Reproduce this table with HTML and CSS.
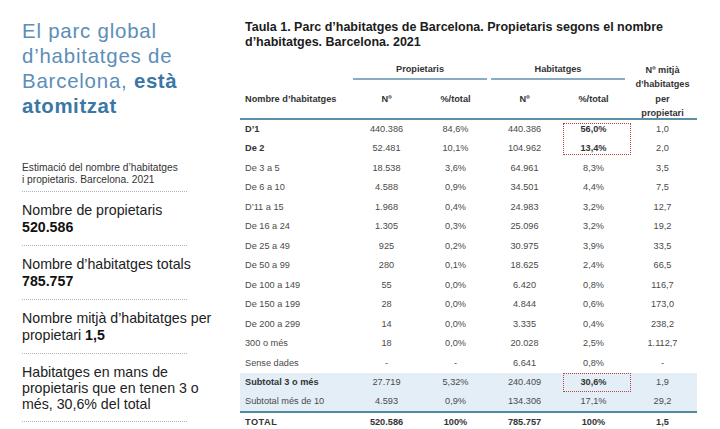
FILE: index.html
```html
<!DOCTYPE html>
<html lang="ca">
<head>
<meta charset="utf-8">
<title>Parc d'habitatges de Barcelona</title>
<link rel="stylesheet" href="styles.css">
</head>
<body>
<div class="page">
  <aside class="side">
    <h1 class="headline">El parc global<br>d’habitatges de<br>Barcelona, <b>està</b><br><b>atomitzat</b></h1>
    <p class="caption">Estimació del nombre d’habitatges<br>i propietaris. Barcelona. 2021</p>
    <div class="stat">Nombre de propietaris<br><b>520.586</b></div>
    <div class="stat">Nombre d’habitatges totals<br><b>785.757</b></div>
    <div class="stat">Nombre mitjà d’habitatges per propietari <b>1,5</b></div>
    <div class="stat last">Habitatges en mans de propietaris que en tenen 3 o més, 30,6% del total</div>
  </aside>
  <main class="main">
    <h2 class="table-title">Taula 1. Parc d’habitatges de Barcelona. Propietaris segons el nombre d’habitatges. Barcelona. 2021</h2>
    <table class="data">
      <thead>
        <tr class="h1">
          <th rowspan="2" class="lab">Nombre d’habitatges</th>
          <th colspan="2" class="grp"><span>Propietaris</span></th>
          <th colspan="2" class="grp"><span>Habitatges</span></th>
          <th rowspan="2" class="avg"><span class="avg-text">Nº mitjà<br>d’habitatges<br>per<br>propietari</span></th>
        </tr>
        <tr class="h2">
          <th>Nº</th><th>%/total</th><th>Nº</th><th>%/total</th>
        </tr>
      </thead>
      <tbody>
        <tr><td class="lab b">D’1</td><td>440.386</td><td>84,6%</td><td>440.386</td><td class="b mark"><span class="box box2"></span>56,0%</td><td>1,0</td></tr>
        <tr><td class="lab b">De 2</td><td>52.481</td><td>10,1%</td><td>104.962</td><td class="b">13,4%</td><td>2,0</td></tr>
        <tr><td class="lab">De 3 a 5</td><td>18.538</td><td>3,6%</td><td>64.961</td><td>8,3%</td><td>3,5</td></tr>
        <tr><td class="lab">De 6 a 10</td><td>4.588</td><td>0,9%</td><td>34.501</td><td>4,4%</td><td>7,5</td></tr>
        <tr><td class="lab">D’11 a 15</td><td>1.968</td><td>0,4%</td><td>24.983</td><td>3,2%</td><td>12,7</td></tr>
        <tr><td class="lab">De 16 a 24</td><td>1.305</td><td>0,3%</td><td>25.096</td><td>3,2%</td><td>19,2</td></tr>
        <tr><td class="lab">De 25 a 49</td><td>925</td><td>0,2%</td><td>30.975</td><td>3,9%</td><td>33,5</td></tr>
        <tr><td class="lab">De 50 a 99</td><td>280</td><td>0,1%</td><td>18.625</td><td>2,4%</td><td>66,5</td></tr>
        <tr><td class="lab">De 100 a 149</td><td>55</td><td>0,0%</td><td>6.420</td><td>0,8%</td><td>116,7</td></tr>
        <tr><td class="lab">De 150 a 199</td><td>28</td><td>0,0%</td><td>4.844</td><td>0,6%</td><td>173,0</td></tr>
        <tr><td class="lab">De 200 a 299</td><td>14</td><td>0,0%</td><td>3.335</td><td>0,4%</td><td>238,2</td></tr>
        <tr><td class="lab">300 o més</td><td>18</td><td>0,0%</td><td>20.028</td><td>2,5%</td><td>1.112,7</td></tr>
        <tr><td class="lab">Sense dades</td><td>-</td><td>-</td><td>6.641</td><td>0,8%</td><td>-</td></tr>
        <tr class="sub"><td class="lab b">Subtotal 3 o més</td><td>27.719</td><td>5,32%</td><td>240.409</td><td class="b mark"><span class="box box1"></span>30,6%</td><td>1,9</td></tr>
        <tr class="sub"><td class="lab">Subtotal més de 10</td><td>4.593</td><td>0,9%</td><td>134.306</td><td>17,1%</td><td>29,2</td></tr>
        <tr class="total"><td class="lab">TOTAL</td><td>520.586</td><td>100%</td><td>785.757</td><td>100%</td><td>1,5</td></tr>
      </tbody>
    </table>
  </main>
</div>
</body>
</html>
```
FILE: styles.css
```css
* { box-sizing: border-box; }
html, body { margin: 0; padding: 0; background: #ffffff; }
body { font-family: "Liberation Sans", Arial, sans-serif; color: #222; }

.page {
  display: flex;
  width: 720px;
  height: 429px;
  overflow: hidden;
}

.side {
  width: 240px;
  padding-left: 22px;
  flex: none;
}

.headline {
  margin: 19px 0 0;
  font-size: 20.4px;
  line-height: 25px;
  font-weight: normal;
  letter-spacing: 0.8px;
  color: #5b8eb8;
}
.headline b { color: #3b77a5; font-weight: bold; letter-spacing: 0.6px; }

.caption {
  margin: 43px 0 0;
  width: 165px;
  font-size: 10.2px;
  line-height: 12px;
  color: #333;
  padding-bottom: 5px;
  border-bottom: 1px dotted #a7b6c6;
}

.stat {
  width: 200px;
  padding-top: 10px;
  font-size: 14.2px;
  line-height: 17px;
  color: #222;
}
.stat b { color: #111; }
.stat::after {
  content: "";
  display: block;
  width: 165px;
  margin-top: 9px;
  border-bottom: 1px dotted #a7b6c6;
}
.stat.last { line-height: 16px; }

.main {
  flex: none;
  width: 470px;
}

.table-title {
  margin: 20px 0 0 5px;
  width: 455px;
  font-size: 12.5px;
  line-height: 15px;
  font-weight: bold;
  color: #1c1c1c;
}

.data {
  margin-top: 4px;
  border-collapse: collapse;
  width: 457px;
  table-layout: fixed;
  font-size: 9.2px;
  color: #4a4a4a;
}
.data th, .data td { padding: 0; text-align: center; }
.data th.lab, .data td.lab { text-align: left; padding-left: 5px; width: 112px; }

.data thead th { font-weight: bold; color: #333; font-size: 9.2px; }
.data .h1 { height: 26px; }
.data .h1 th { vertical-align: bottom; }
.data .h2 { height: 39px; }
.data .grp span {
  display: block;
  margin: 0 3px 0 1px;
  padding-bottom: 4px;
  border-bottom: 2px solid #86adc3;
}
.data th.avg {
  vertical-align: bottom;
  line-height: 14.2px;
  padding-bottom: 0;
}
.avg-text {
  display: block;
  margin-bottom: -2px;
}
.data thead tr.h2 th, .data thead th.lab, .data thead th.avg {
  border-bottom: 2px solid #5a90aa;
}
.data th.lab { vertical-align: middle; padding-top: 26px; }

.data tbody tr { height: 19.5px; }
.data tbody td { vertical-align: middle; }
.data .b { font-weight: bold; color: #333; }

.data tr.sub td { background: #e4eef7; }
.data tr.total td {
  border-top: 2px solid #4f889f;
  font-weight: bold;
  color: #333;
}
.data tr.total td.lab { letter-spacing: 0.5px; }

.data td.mark { position: relative; }
.box {
  position: absolute;
  left: 4px;
  width: 68px;
  border: 1px dotted #b8463f;
}
.box2 { top: 3px; height: 32px; }
.box1 { top: 0; height: 19px; }
```
